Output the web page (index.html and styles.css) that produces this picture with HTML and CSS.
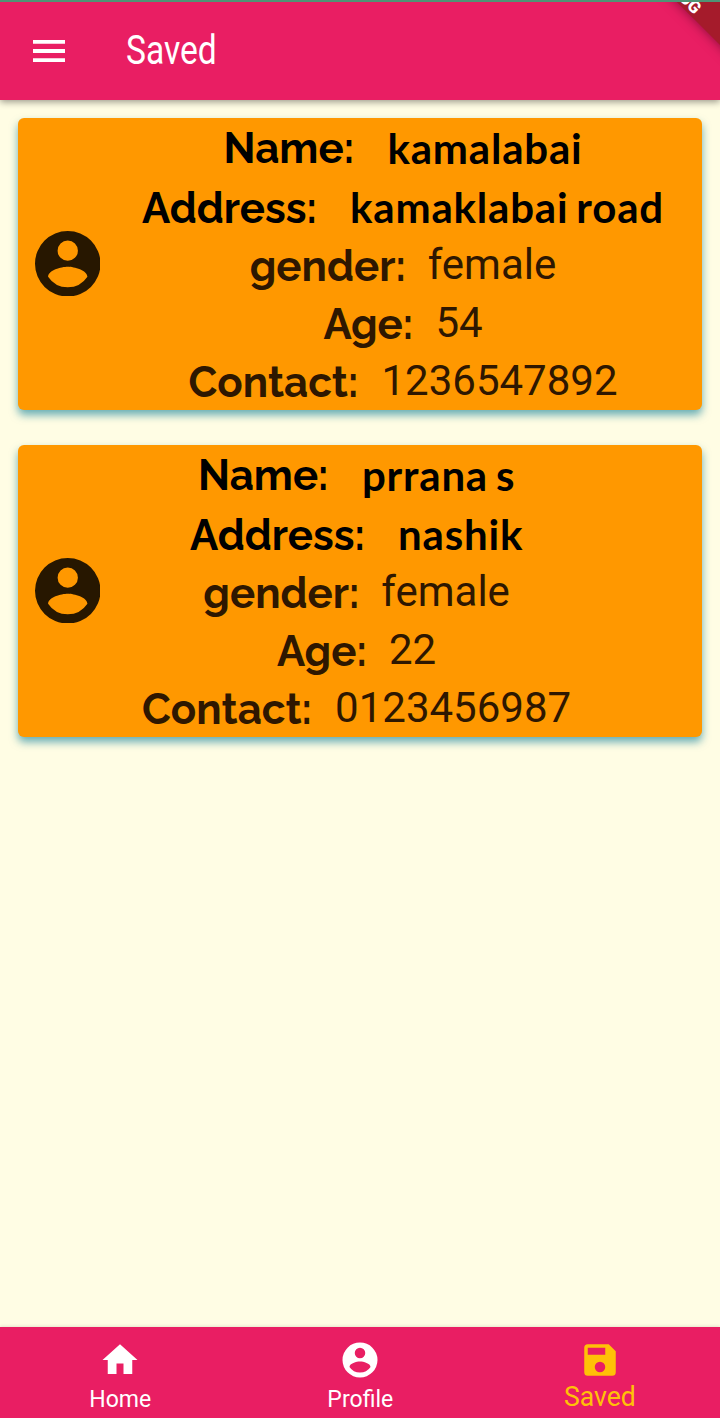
FILE: index.html
```html
<!DOCTYPE html>
<html lang="en">
<head>
<meta charset="utf-8">
<title>Saved</title>
<link rel="stylesheet" href="styles.css">
</head>
<body>
<div class="app">
  <header class="bar">
    <svg class="menu" viewBox="0 0 32 22"><path d="M0 0h32v3.8H0zM0 9.1h32v3.8H0zM0 18.200h32V22H0z"/></svg>
    <h1 class="title">Saved</h1>
    <div class="ribbon-clip"><div class="ribbon">DEBUG</div></div>
  </header>
  <main class="list">
    <section class="card">
      <svg class="avatar" viewBox="2 2 20 20"><path fill-rule="evenodd" d="M12 2a10 10 0 1 0 0 20 10 10 0 0 0 0-20zm0 2.900a3.100 3.100 0 1 1 0 6.200 3.100 3.100 0 0 1 0-6.200zm0 14.300a7.200 7.200 0 0 1-6-3.220c.03-1.990 4-3.080 6-3.080s5.970 1.090 6 3.080a7.200 7.200 0 0 1-6 3.220z"/></svg>
      <div class="details">
        <div class="row strong first"><span class="label name">Name:</span><span class="value">kamalabai</span></div>
        <div class="row strong"><span class="label address">Address:</span><span class="value">kamaklabai road</span></div>
        <div class="row"><span class="label gender">gender:</span><span class="value">female</span></div>
        <div class="row"><span class="label age">Age:</span><span class="value">54</span></div>
        <div class="row"><span class="label contact">Contact:</span><span class="value">1236547892</span></div>
      </div>
    </section>
    <section class="card">
      <svg class="avatar" viewBox="2 2 20 20"><path fill-rule="evenodd" d="M12 2a10 10 0 1 0 0 20 10 10 0 0 0 0-20zm0 2.900a3.100 3.100 0 1 1 0 6.200 3.100 3.100 0 0 1 0-6.200zm0 14.300a7.200 7.200 0 0 1-6-3.220c.03-1.990 4-3.080 6-3.080s5.970 1.090 6 3.080a7.200 7.200 0 0 1-6 3.220z"/></svg>
      <div class="details">
        <div class="row strong first"><span class="label name">Name:</span><span class="value">prrana s</span></div>
        <div class="row strong"><span class="label address">Address:</span><span class="value">nashik</span></div>
        <div class="row"><span class="label gender">gender:</span><span class="value">female</span></div>
        <div class="row"><span class="label age">Age:</span><span class="value">22</span></div>
        <div class="row"><span class="label contact">Contact:</span><span class="value">0123456987</span></div>
      </div>
    </section>
  </main>
  <nav class="tabs">
    <a class="tab"><svg class="icon" viewBox="0 0 24 24"><path d="M10 20v-6h4v6h5v-8h3L12 3 2 12h3v8z"/></svg><span>Home</span></a>
    <a class="tab"><svg class="icon" viewBox="0 0 24 24"><path fill-rule="evenodd" d="M12 2a10 10 0 1 0 0 20 10 10 0 0 0 0-20zm0 3a3 3 0 1 1 0 6 3 3 0 0 1 0-6zm0 14.200a7.200 7.200 0 0 1-6-3.220c.03-1.990 4-3.080 6-3.080s5.970 1.090 6 3.080a7.200 7.200 0 0 1-6 3.220z"/></svg><span>Profile</span></a>
    <a class="tab active"><svg class="icon" viewBox="0 0 24 24"><path d="M17 3H5a2 2 0 0 0-2 2v14a2 2 0 0 0 2 2h14a2 2 0 0 0 2-2V7l-4-4zm-5 16a3 3 0 1 1 0-6 3 3 0 0 1 0 6zm3-10H5V5h10v4z"/></svg><span>Saved</span></a>
  </nav>
</div>
</body>
</html>
```
FILE: styles.css
```css
* { box-sizing: border-box; }
body { margin: 0; background: #fffde4; font-family: Roboto, sans-serif; }
.app { height: 1418px; display: flex; flex-direction: column; overflow: hidden; }
.bar {
  position: relative; height: 100px; flex: none; display: flex; align-items: center;
  padding: 2px 0 0 33px; background: #e91e63; border-top: 2px solid #4e9475;
  box-shadow: 0 2px 7px rgba(0,0,0,.4); color: #fff;
}
.menu { width: 32px; height: 22px; fill: #fff; margin-top: -2px; }
.title { margin: -2px 0 0 61px; font-size: 40px; font-weight: 400; line-height: 48px; transform: scaleX(.84); transform-origin: 0 50%; }
.ribbon-clip { position: absolute; top: 0; right: 0; width: 100px; height: 98px; overflow: hidden; }
.ribbon {
  position: absolute; left: 9px; top: -9px; width: 160px; height: 34px; padding: 17px 87px 0 0;
  transform: rotate(45deg); background: #a51b2b; box-shadow: 0 0 12px rgba(70,0,30,.6);
  color: #fff; font-size: 17px; font-weight: 900; line-height: 17px; text-align: right;
}
.list { flex: 1; padding: 17.500px 17.700px 0 17.600px; display: flex; flex-direction: column; gap: 35px; }
.card {
  height: 292px; display: flex; align-items: center; padding-left: 17px;
  background: #ff9800; border-radius: 6px; box-shadow: 0 5px 8px rgba(0,120,150,.6);
}
.avatar { width: 65.500px; height: 65.500px; fill: #271700; flex: none; }
.details { height: 292px; margin-left: 42px; display: flex; flex-direction: column; align-items: center; }
.row { height: 58px; flex: none; display: flex; align-items: baseline; font-size: 42px; line-height: 58px; color: #2e1700; white-space: nowrap; }
.strong { height: 60px; color: #000; }
.label { font-family: Raleway, Lato, sans-serif; font-weight: 700; font-size: 42px; }
.value { position: relative; top: -2px; }
.strong .value { top: 0; font-family: Lato, sans-serif; font-weight: 700; font-size: 42px; letter-spacing: .8px; word-spacing: -3px; }
.first .value { top: 1px; }
.name { width: 164px; }
.address { width: 208px; }
.gender { width: 178px; }
.age { width: 112px; }
.contact { width: 193px; }
.tabs { height: 91px; flex: none; display: flex; background: #e91e63; box-shadow: 0 -1px 3px rgba(0,0,0,.1); }
.tab { flex: 1; display: flex; flex-direction: column; align-items: center; padding-top: 12px; color: #fff; font-size: 24px; line-height: 28px; }
.icon { width: 42px; height: 42px; fill: currentColor; flex: none; }
.tab span { margin-top: 4px; transform: scaleX(.96); }
.active { color: #ffc107; font-size: 28px; }
.tab.active span { margin-top: 2px; transform: scaleX(.95); }
```
